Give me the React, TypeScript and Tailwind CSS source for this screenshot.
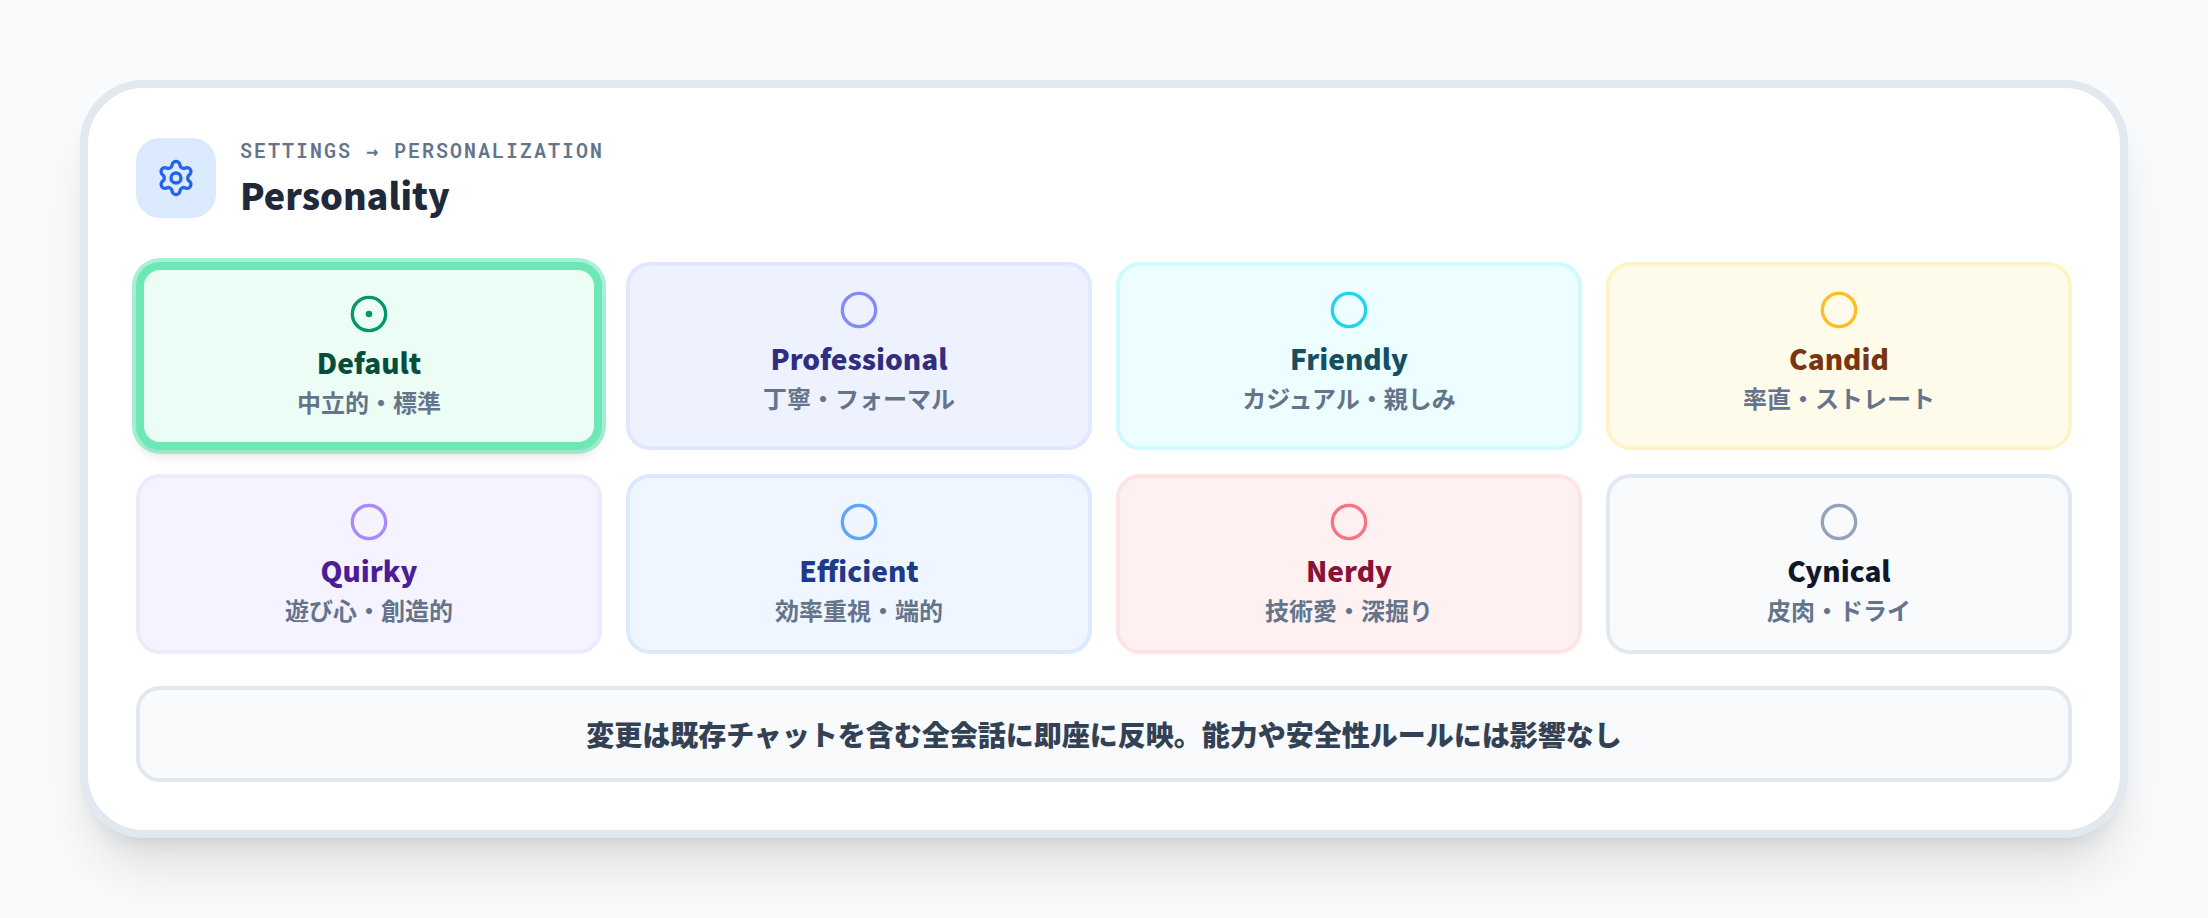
import React, { useState } from 'react'
import { Circle, CircleDot, Settings } from 'lucide-react'

interface Personality {
  name: string
  description: string
  card: string
  icon: string
  title: string
}

const personalities: Personality[] = [
  {
    name: 'Default',
    description: '中立的・標準',
    card: 'bg-[#ecfdf5] border-[#6ee7b7]',
    icon: 'text-[#059669]',
    title: 'text-[#064e3b]',
  },
  {
    name: 'Professional',
    description: '丁寧・フォーマル',
    card: 'bg-[#eef2ff] border-[#e0e7ff]',
    icon: 'text-[#818cf8]',
    title: 'text-[#312e81]',
  },
  {
    name: 'Friendly',
    description: 'カジュアル・親しみ',
    card: 'bg-[#ecfeff] border-[#cffafe]',
    icon: 'text-[#22d3ee]',
    title: 'text-[#164e63]',
  },
  {
    name: 'Candid',
    description: '率直・ストレート',
    card: 'bg-[#fffbeb] border-[#fef3c7]',
    icon: 'text-[#fbbf24]',
    title: 'text-[#78350f]',
  },
  {
    name: 'Quirky',
    description: '遊び心・創造的',
    card: 'bg-[#f5f3ff] border-[#ede9fe]',
    icon: 'text-[#a78bfa]',
    title: 'text-[#4c1d95]',
  },
  {
    name: 'Efficient',
    description: '効率重視・端的',
    card: 'bg-[#eff6ff] border-[#dbeafe]',
    icon: 'text-[#60a5fa]',
    title: 'text-[#1e3a8a]',
  },
  {
    name: 'Nerdy',
    description: '技術愛・深掘り',
    card: 'bg-[#fff1f2] border-[#ffe4e6]',
    icon: 'text-[#fb7185]',
    title: 'text-[#881337]',
  },
  {
    name: 'Cynical',
    description: '皮肉・ドライ',
    card: 'bg-[#f8fafc] border-[#e2e8f0]',
    icon: 'text-[#94a3b8]',
    title: 'text-[#0f172a]',
  },
]

const App: React.FC = () => {
  const [selected, setSelected] = useState('Default')

  return (
    <main className="min-h-screen bg-[#f8fafc] p-20 font-['Noto_Sans_CJK_JP',sans-serif]">
      <section className="rounded-[64px] border-8 border-[#e2e8f0] bg-white p-12 shadow-[0_40px_50px_-10px_rgba(0,0,0,0.1),0_16px_20px_-12px_rgba(0,0,0,0.1)]">
        {/* ヘッダー */}
        <header className="mb-[42px] flex items-center gap-6">
          <div className="flex h-20 w-20 items-center justify-center rounded-3xl bg-[#dbeafe]">
            <Settings className="h-10 w-10 text-[#2563eb]" />
          </div>
          <div>
            <p className="font-['Roboto_Mono','DejaVu_Sans_Mono',monospace] text-xl leading-7 font-semibold tracking-widest text-[#64748b] uppercase">
              Settings → Personalization
            </p>
            <h1 className="mt-1 text-4xl leading-[52px] font-black text-[#1e293b]">Personality</h1>
          </div>
        </header>

        {/* 性格カード */}
        <div className="grid grid-cols-4 gap-6">
          {personalities.map((item) => {
            const active = item.name === selected
            const Icon = active ? CircleDot : Circle
            return (
              <button
                key={item.name}
                type="button"
                aria-pressed={active}
                onClick={() => setSelected(item.name)}
                className={`flex flex-col items-center justify-start rounded-3xl p-6 text-center ${item.card} ${
                  active
                    ? 'border-8 shadow-[0_0_0_4px_rgba(110,231,183,0.6),0_8px_12px_-2px_rgba(0,0,0,0.1),0_4px_8px_-4px_rgba(0,0,0,0.1)]'
                    : 'border-4'
                }`}
              >
                <Icon className={`mb-2 h-10 w-10 ${item.icon}`} />
                <span className={`text-[28px] leading-10 font-black ${item.title}`}>{item.name}</span>
                <span className="mt-1 text-2xl leading-8 font-bold text-[#64748b]">{item.description}</span>
              </button>
            )
          })}
        </div>

        {/* 注意書き */}
        <p className="mt-8 rounded-3xl border-4 border-[#e2e8f0] bg-[#f8fafc] p-6 text-center text-[28px] leading-10 font-black text-[#334155]">
          変更は既存チャットを含む全会話に即座に反映。能力や安全性ルールには影響なし
        </p>
      </section>
    </main>
  )
}

export default App
